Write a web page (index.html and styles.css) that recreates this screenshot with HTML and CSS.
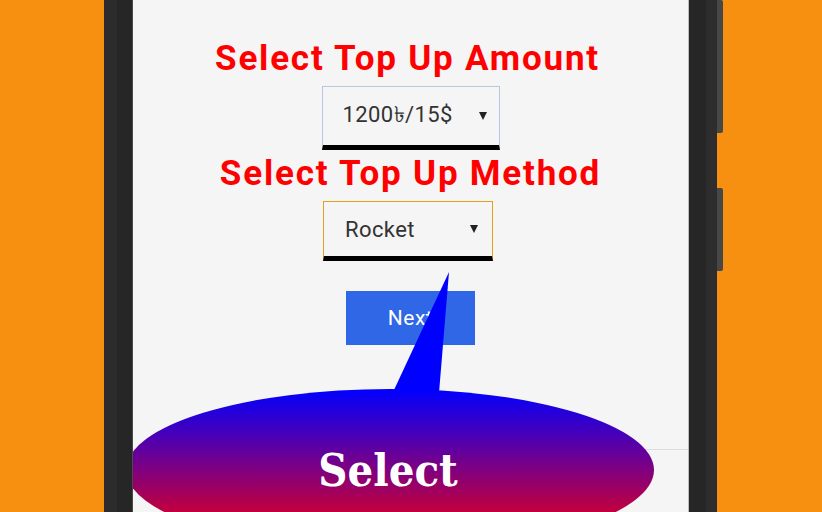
FILE: index.html
```html
<!DOCTYPE html>
<html lang="en">
<head>
  <meta charset="UTF-8"/>
  <meta name="viewport" content="width=device-width, initial-scale=1.0"/>
  <title>Top Up</title>
  <link rel="stylesheet" href="styles.css">
</head>
<body>
  <div class="phone">
    <div class="bezel bezel-left"></div>
    <div class="screen">
      <h2 class="title title-amount">Select Top Up Amount</h2>
      <div class="picker picker-amount">
        <span>1200৳/15$</span>
        <i class="caret"></i>
      </div>
      <h2 class="title title-method">Select Top Up Method</h2>
      <div class="picker picker-method">
        <span>Rocket</span>
        <i class="caret"></i>
      </div>
      <button class="next" type="button">Next</button>
      <div class="bottom-bar"></div>

      <!-- tooltip bubble over the form -->
      <svg class="bubble" width="555" height="242" viewBox="0 0 555 242">
        <defs>
          <linearGradient id="bubbleFill" gradientUnits="userSpaceOnUse" x1="0" y1="119" x2="0" y2="281">
            <stop offset="0" stop-color="#0000ff"/>
            <stop offset="1" stop-color="#ff0000"/>
          </linearGradient>
        </defs>
        <polygon points="316,2 254,135 305,135" fill="#0000ff"/>
        <ellipse cx="257" cy="200" rx="264" ry="81" fill="url(#bubbleFill)"/>
        <text class="bubble-text" x="255" y="216" text-anchor="middle">Select</text>
      </svg>
    </div>
    <div class="bezel bezel-right"></div>
    <div class="keys">
      <span class="key key-power"></span>
      <span class="key key-volume"></span>
    </div>
  </div>
</body>
</html>
```

FILE: styles.css
```css
body { margin: 0; background: #f78f10; font-family: Roboto, "Liberation Sans", sans-serif; overflow: hidden; }
.phone { display: flex; height: 512px; margin-left: 104px; }
.bezel { width: 29px; }
.bezel-left { background: linear-gradient(to right, #2c2c2c 0, #2c2c2c 13px, #262626 13px, #262626 28px, #4a4a4a 28px); }
.bezel-right { background: linear-gradient(to right, #bdbdbd 0, #bdbdbd 1px, #262626 1px, #262626 18px, #2d2d2d 18px); }
.screen { position: relative; width: 555px; background: #f5f5f5; display: flex; flex-direction: column; align-items: center; overflow: hidden; }

.title { margin: 0; color: #ff0000; font-size: 35px; font-weight: bold; line-height: 40px; letter-spacing: 1.8px; }
.title-amount { margin-top: 39px; margin-left: -6px; }
.title-method { margin-top: 4px; }

.picker { display: flex; align-items: center; justify-content: space-between; box-sizing: border-box; background: #f5f5f5; color: #333; font-size: 22px; letter-spacing: 0.4px; }
.picker span { margin-top: -2px; }
.picker-amount { width: 178px; height: 64px; margin-top: 7px; padding: 0 12px 0 20px; border: 1px solid #b4c8e4; border-bottom: 5px solid #000; }
.picker-method { width: 170px; height: 60px; margin-top: 7px; margin-left: -5px; padding: 0 14px 0 21px; border: 1px solid #e3a11e; border-bottom: 5px solid #000; }
.picker-method span { margin-top: 0; }
.caret { width: 0; height: 0; border-left: 4px solid transparent; border-right: 4px solid transparent; border-top: 8px solid #222; }

.next { margin-top: 30px; width: 129px; height: 54px; border: none; background: #3067e6; color: #fff; font-family: Roboto, sans-serif; font-size: 21px; letter-spacing: 0.5px; }

.bottom-bar { margin-top: auto; align-self: stretch; height: 63px; border-top: 1px solid #dedede; box-sizing: border-box; }

.bubble { position: absolute; left: 0; top: 270px; }
.bubble-text { fill: #fff; font-family: "DejaVu Serif Condensed", "DejaVu Serif", serif; font-weight: bold; font-size: 45px; }

.keys { display: flex; flex-direction: column; width: 6px; }
.key { display: block; background: #474747; border-radius: 0 2px 2px 0; }
.key-power { height: 133px; }
.key-volume { height: 83px; margin-top: 55px; }
```
